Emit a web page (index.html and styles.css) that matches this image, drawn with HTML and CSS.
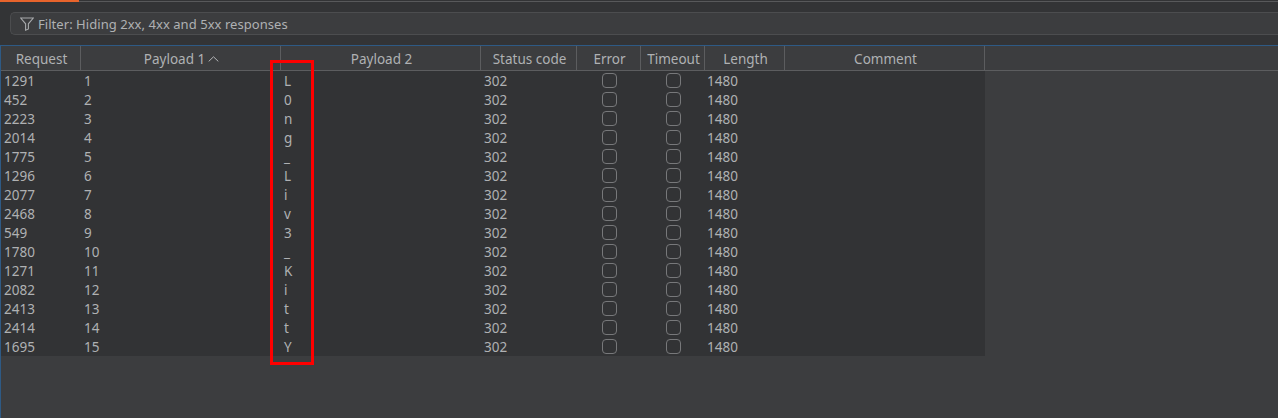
FILE: index.html
```html
<!DOCTYPE html>
<html>

<head>
    <title>Intruder results</title>
    <link rel="stylesheet" href="styles.css">
</head>

<body>
    <div class="tabs-strip">
        <div class="tab-active"></div>
        <div class="tab-line"></div>
    </div>

    <div class="filter-bar">
        <svg class="filter-icon" width="14" height="14" viewBox="0 0 14 14">
            <path d="M0.7 1H13.3L8.4 6.8V12L5.6 13.2V6.8Z" fill="none" stroke="#a8aaac" stroke-width="1.1"/>
        </svg>
        <span class="filter-text">Filter: Hiding 2xx, 4xx and 5xx responses</span>
    </div>

    <div class="results">
        <div class="table-wrap">
            <div class="header-row">
                <div class="head col-req">Request</div>
                <div class="head col-p1">Payload 1
                    <svg class="sort-icon" width="11" height="6" viewBox="0 0 11 6">
                        <path d="M0.7 5.4L5.5 0.8L10.3 5.4" fill="none" stroke="#b4b6b8" stroke-width="1"/>
                    </svg>
                </div>
                <div class="head col-p2">Payload 2</div>
                <div class="head col-status">Status code</div>
                <div class="head col-error">Error</div>
                <div class="head col-timeout">Timeout</div>
                <div class="head col-length">Length</div>
                <div class="head col-comment">Comment</div>
            </div>
            <div id="rows" class="rows"></div>
            <div class="highlight"></div>
        </div>
    </div>

    <script>
        const data = [
            [1291, 1, 'L'], [452, 2, '0'], [2223, 3, 'n'], [2014, 4, 'g'], [1775, 5, '_'],
            [1296, 6, 'L'], [2077, 7, 'i'], [2468, 8, 'v'], [549, 9, '3'], [1780, 10, '_'],
            [1271, 11, 'K'], [2082, 12, 'i'], [2413, 13, 't'], [2414, 14, 't'], [1695, 15, 'Y']
        ];

        const rows = document.getElementById('rows');
        for (const [req, num, ch] of data) {
            const row = document.createElement('div');
            row.className = 'row';
            row.innerHTML = `
                <div class="cell col-req">${req}</div>
                <div class="cell col-p1">${num}</div>
                <div class="cell col-p2">${ch}</div>
                <div class="cell col-status">302</div>
                <div class="cell col-error"><span class="check"></span></div>
                <div class="cell col-timeout"><span class="check"></span></div>
                <div class="cell col-length">1480</div>
                <div class="cell col-comment"></div>`;
            rows.appendChild(row);
        }
    </script>
</body>

</html>
```
FILE: styles.css
```css
html,
body {
    margin: 0;
    height: 100%;
    overflow: hidden;
}

body {
    background-color: #333436;
    font-family: "Noto Sans", sans-serif;
    font-size: 13px;
    color: #afb1b3;
}

.tabs-strip {
    display: flex;
    align-items: flex-end;
    height: 2px;
}

.tab-active {
    width: 79px;
    height: 2px;
    background-color: #e8642c;
}

.tab-line {
    flex: 1;
    height: 1px;
    background-color: #58595b;
}

.filter-bar {
    display: flex;
    align-items: center;
    gap: 4px;
    height: 21px;
    margin-top: 10px;
    margin-left: 10px;
    padding-left: 9px;
    background-color: #3c3d3f;
    border: 1px solid #4c4d4f;
    border-right: none;
    border-radius: 5px 0 0 5px;
}

.filter-icon {
    flex: none;
}

.filter-text {
    letter-spacing: 0.05px;
}

.results {
    height: 373px;
    margin-top: 10px;
    background-color: #3c3d3f;
    border-top: 1px solid #2e5a85;
    border-left: 1px solid #2e5a85;
    box-sizing: border-box;
}

.table-wrap {
    position: relative;
    font-size: 13.5px;
}

.header-row {
    display: flex;
    height: 24px;
    border-bottom: 1px solid #5c5d5f;
}

.head {
    display: flex;
    align-items: center;
    justify-content: center;
    gap: 3px;
    box-sizing: border-box;
    padding: 1px 0 0 2px;
    border-right: 1px solid #5c5d5f;
}

.rows {
    width: 984px;
    background-color: #323335;
}

.row {
    display: flex;
    height: 19px;
}

.cell {
    display: flex;
    align-items: center;
    box-sizing: border-box;
    padding-left: 3px;
}

.col-req { width: 80px; }
.col-p1 { width: 200px; }
.col-p2 { width: 200px; }
.col-status { width: 96px; }
.col-error { width: 64px; }
.col-timeout { width: 64px; }
.col-length { width: 80px; }
.col-comment { width: 200px; }

.col-error.cell,
.col-timeout.cell {
    justify-content: center;
    padding-left: 1px;
}

.col-length.cell {
    padding-left: 2px;
}

.check {
    width: 15px;
    height: 15px;
    box-sizing: border-box;
    border: 1px solid #77787a;
    border-radius: 4px;
}

/* red marker drawn on top of the payload 2 column */
.highlight {
    position: absolute;
    left: 269px;
    top: 14px;
    width: 44px;
    height: 305px;
    box-sizing: border-box;
    border: 3px solid #ff0000;
}
```
